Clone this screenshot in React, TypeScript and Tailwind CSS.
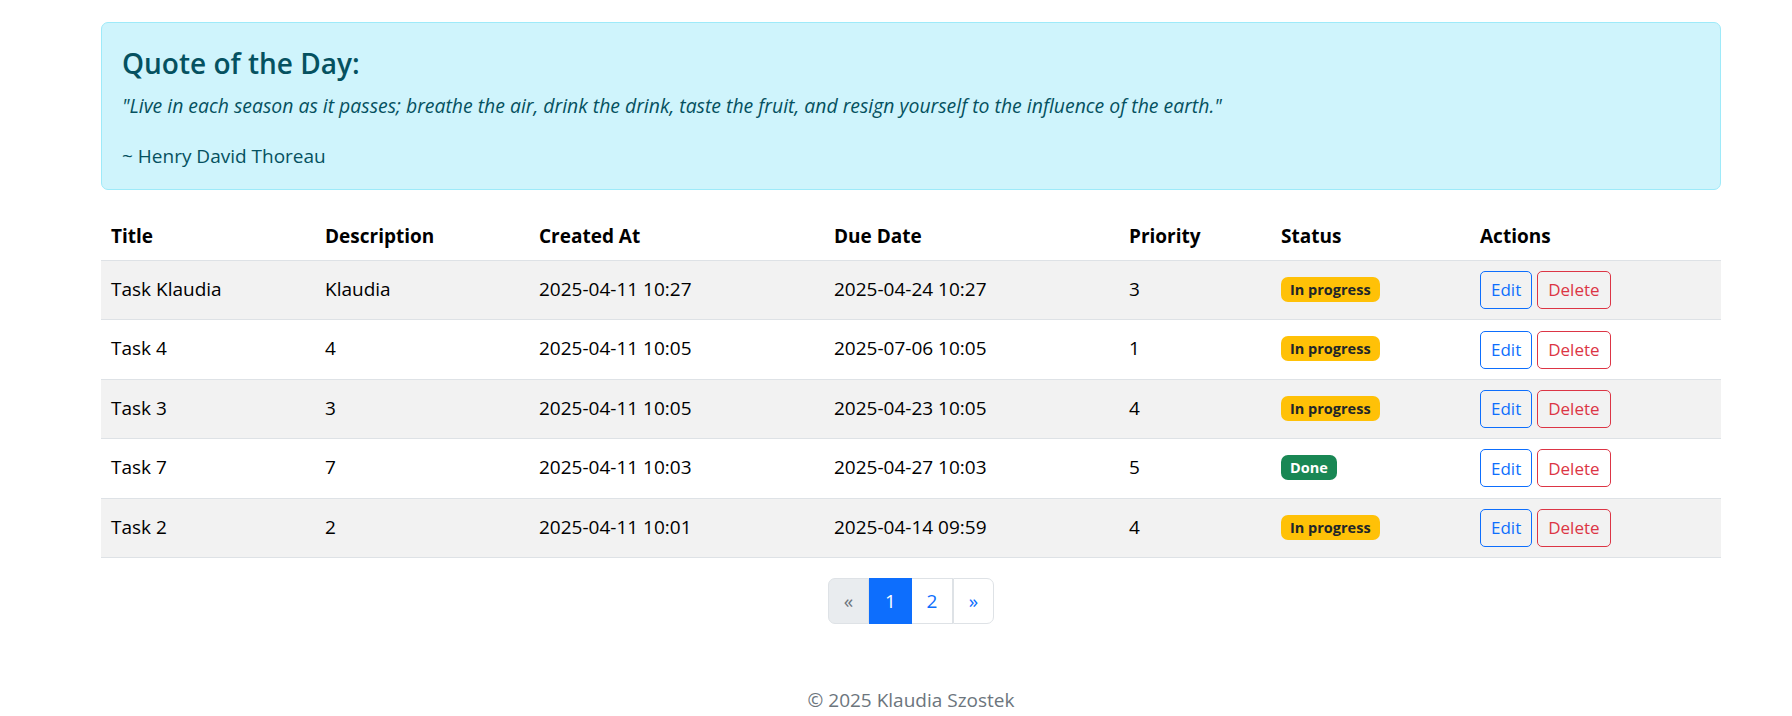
import { Fragment } from 'react';

const tasks = [
  { title: 'Task Klaudia', description: 'Klaudia', createdAt: '2025-04-11 10:27', dueDate: '2025-04-24 10:27', priority: 3, status: 'In progress' },
  { title: 'Task 4', description: '4', createdAt: '2025-04-11 10:05', dueDate: '2025-07-06 10:05', priority: 1, status: 'In progress' },
  { title: 'Task 3', description: '3', createdAt: '2025-04-11 10:05', dueDate: '2025-04-23 10:05', priority: 4, status: 'In progress' },
  { title: 'Task 7', description: '7', createdAt: '2025-04-11 10:03', dueDate: '2025-04-27 10:03', priority: 5, status: 'Done' },
  { title: 'Task 2', description: '2', createdAt: '2025-04-11 10:01', dueDate: '2025-04-14 09:59', priority: 4, status: 'In progress' },
];

const headers = ['Title', 'Description', 'Created At', 'Due Date', 'Priority', 'Status', 'Actions'];

// same column widths for header and body rows
const cols = 'grid grid-cols-[214px_214px_295px_295px_152px_199px_251px]';

function StatusBadge({ status }: { status: string }) {
  const done = status === 'Done';
  return (
    <span
      className={`inline-block rounded-[7px] px-[9px] py-[4px] text-[14.5px] font-bold leading-[17px] ${
        done ? 'bg-[#198754] text-white' : 'bg-[#ffc107] text-[#212529]'
      }`}
    >
      {status}
    </span>
  );
}

export default function App() {
  return (
    <div className="min-h-[716px] bg-white font-['Open_Sans',sans-serif] text-[19px] text-black">
      <div className="ml-[101px] w-[1620px] pt-[22px]">
        {/* Quote of the day */}
        <div className="rounded-[7px] border border-[#9eeaf9] bg-[#cff4fc] px-[20px] pt-[22px] pb-[18px] text-[#055160]">
          <h4 className="mb-[10px] text-[28px] font-semibold leading-[36px]">Quote of the Day:</h4>
          <p className="mb-[20px] text-[19.4px] italic leading-[30px]">
            "Live in each season as it passes; breathe the air, drink the drink, taste the fruit, and resign yourself to the influence of the earth."
          </p>
          <p className="leading-[30px]">~ Henry David Thoreau</p>
        </div>

        {/* Tasks table */}
        <div className="mt-[20px]">
          <div className={`${cols} h-[51px] items-center border-b border-[#dee2e6]`}>
            {headers.map((h) => (
              <div key={h} className="px-[10px] pt-[2px] font-bold">
                {h}
              </div>
            ))}
          </div>
          {tasks.map((t, idx) => (
            <div
              key={idx}
              className={`${cols} h-[59.4px] items-center border-b border-[#dee2e6] ${idx % 2 === 0 ? 'bg-[#f2f2f2]' : 'bg-white'}`}
            >
              <div className="px-[10px] pb-[2px]">{t.title}</div>
              <div className="px-[10px] pb-[2px]">{t.description}</div>
              <div className="px-[10px] pb-[2px]">{t.createdAt}</div>
              <div className="px-[10px] pb-[2px]">{t.dueDate}</div>
              <div className="px-[10px] pb-[2px]">{t.priority}</div>
              <div className="px-[10px] -mt-[4px]">
                <StatusBadge status={t.status} />
              </div>
              <div className="flex gap-[5px] px-[10px]">
                <button className="h-[38px] rounded-[5px] border border-[#0d6efd] px-[10px] text-[17px] text-[#0d6efd]">
                  Edit
                </button>
                <button className="h-[38px] rounded-[5px] border border-[#dc3545] px-[10px] text-[17px] text-[#dc3545]">
                  Delete
                </button>
              </div>
            </div>
          ))}
        </div>

        {/* Pagination */}
        <div className="mt-[20px] flex justify-center">
          <div className="flex h-[46px] text-[19px]">
            {[
              { label: '«', cls: 'rounded-l-[7px] border border-[#dee2e6] bg-[#e9ecef] text-[#6c757d] w-[41px]' },
              { label: '1', cls: 'border border-[#0d6efd] bg-[#0d6efd] text-white w-[43px]' },
              { label: '2', cls: 'border border-l-0 border-[#dee2e6] bg-white text-[#0d6efd] w-[41px]' },
              { label: '»', cls: 'rounded-r-[7px] border border-l border-[#dee2e6] bg-white text-[#0d6efd] w-[41px]' },
            ].map((p) => (
              <Fragment key={p.label}>
                <span className={`flex items-center justify-center ${p.cls}`}>{p.label}</span>
              </Fragment>
            ))}
          </div>
        </div>

        {/* Footer */}
        <footer className="mt-[61px] text-center leading-[30px] text-[#6c757d]">© 2025 Klaudia Szostek</footer>
      </div>
    </div>
  );
}
